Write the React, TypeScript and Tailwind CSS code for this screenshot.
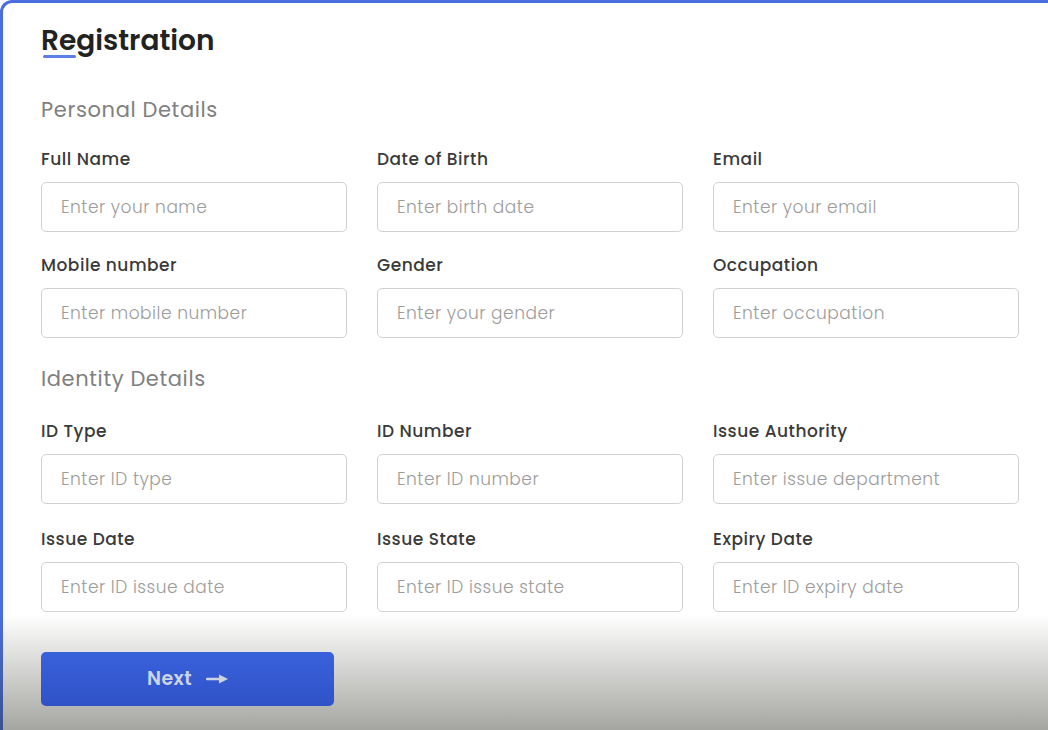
const personal = [
  { label: 'Full Name', placeholder: 'Enter your name' },
  { label: 'Date of Birth', placeholder: 'Enter birth date' },
  { label: 'Email', placeholder: 'Enter your email' },
  { label: 'Mobile number', placeholder: 'Enter mobile number' },
  { label: 'Gender', placeholder: 'Enter your gender' },
  { label: 'Occupation', placeholder: 'Enter occupation' },
]

const identity = [
  { label: 'ID Type', placeholder: 'Enter ID type' },
  { label: 'ID Number', placeholder: 'Enter ID number' },
  { label: 'Issue Authority', placeholder: 'Enter issue department' },
  { label: 'Issue Date', placeholder: 'Enter ID issue date' },
  { label: 'Issue State', placeholder: 'Enter ID issue state' },
  { label: 'Expiry Date', placeholder: 'Enter ID expiry date' },
]

type FieldDef = { label: string; placeholder: string }

function Field({ label, placeholder }: FieldDef) {
  return (
    <div className="flex flex-col">
      <label className="text-[17px] leading-6 tracking-[0.03em] font-medium text-[#3a3a3a]">{label}</label>
      <input
        placeholder={placeholder}
        className="mt-[11px] h-[50px] w-full rounded-[5px] border border-[#d2d2d2] bg-white px-[19px] text-[17px] tracking-[0.03em] font-light text-[#333] outline-none placeholder:text-[#9c9c9c]"
      />
    </div>
  )
}

function FieldGrid({ fields, gapY }: { fields: FieldDef[]; gapY: string }) {
  return (
    <div className={`grid grid-cols-[306px_306px_306px] gap-x-[30px] ${gapY}`}>
      {fields.map((f) => (
        <Field key={f.label} {...f} />
      ))}
    </div>
  )
}

export default function App() {
  return (
    <div
      className="relative h-[730px] w-[1048px] overflow-hidden bg-white"
      style={{ fontFamily: 'Poppins, Inter, "Noto Sans", sans-serif' }}
    >
      <div className="h-full rounded-tl-[12px] border-l-[3px] border-t-[3px] border-[#4a6ee0] bg-white pl-[38px] pt-[20px]">
        <h1 className="relative inline-block text-[28px] leading-9 font-semibold text-[#222222]">
          Registration
          <span className="absolute left-[2px] top-[32px] h-[3px] w-[33px] rounded-full bg-[#5b7fe6]" />
        </h1>

        <h2 className="mt-[37px] text-[21px] leading-7 tracking-[0.03em] font-normal text-[#808080]">Personal Details</h2>
        <div className="mt-[23px]">
          <FieldGrid fields={personal} gapY="gap-y-[21px]" />
        </div>

        <h2 className="mt-[27px] text-[21px] leading-7 tracking-[0.03em] font-normal text-[#808080]">Identity Details</h2>
        <div className="mt-[26px]">
          <FieldGrid fields={identity} gapY="gap-y-[23px]" />
        </div>

        <button className="relative z-10 mt-[40px] flex h-[54px] w-[293px] items-center justify-center gap-[14px] rounded-[5px] bg-gradient-to-b from-[#3a61dc] to-[#2f52c6] text-[19px] tracking-[0.02em] font-semibold text-[#ccd3e2]">
          Next
          <svg width="22" height="10" viewBox="0 0 22 10" fill="currentColor">
            <rect x="0" y="3.7" width="15" height="2.6" rx="1" />
            <path d="M13 0.5 L22 5 L13 9.5 Z" />
          </svg>
        </button>
      </div>

      <div className="pointer-events-none absolute bottom-0 left-0 right-0 h-[116px] bg-gradient-to-b from-transparent to-[rgba(40,40,30,0.42)]" />
    </div>
  )
}
